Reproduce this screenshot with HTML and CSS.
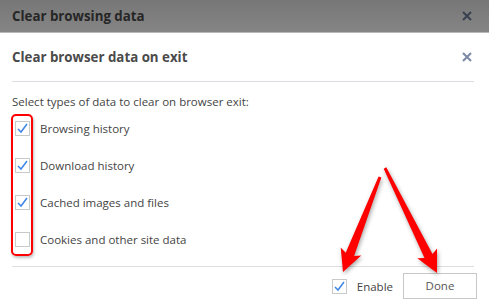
FILE: index.html
```html
<html>
	<head>
		<title>Clear browsing data</title>
		<link rel="stylesheet" href="styles.css">
	</head>
	<body>
		<div class="topbar">
			<span class="top-title">Clear browsing data</span>
			<svg class="close top-close" viewBox="0 0 10 10"><path d="M1 1L9 9M9 1L1 9"/></svg>
		</div>
		<div class="dialog">
			<div class="dialog-head">
				<span class="dialog-title">Clear browser data on exit</span>
				<svg class="close" viewBox="0 0 10 10"><path d="M1 1L9 9M9 1L1 9"/></svg>
			</div>
			<div class="dialog-body">
				<div class="intro">Select types of data to clear on browser exit:</div>
				<div class="option">
					<span class="box on"><svg viewBox="0 0 15 15"><path d="M3 8L6 11L12 3"/></svg></span>
					Browsing history
				</div>
				<div class="option">
					<span class="box on"><svg viewBox="0 0 15 15"><path d="M3 8L6 11L12 3"/></svg></span>
					Download history
				</div>
				<div class="option">
					<span class="box on"><svg viewBox="0 0 15 15"><path d="M3 8L6 11L12 3"/></svg></span>
					Cached images and files
				</div>
				<div class="option">
					<span class="box"></span>
					Cookies and other site data
				</div>
			</div>
			<div class="dialog-foot">
				<span class="box on"><svg viewBox="0 0 15 15"><path d="M3 8L6 11L12 3"/></svg></span>
				<span class="enable">Enable</span>
				<div class="btn">Done</div>
			</div>
		</div>
		<!-- annotations drawn on top of the screenshot -->
		<div class="mark"></div>
		<svg class="arrows" viewBox="0 0 489 308">
			<polygon points="381.4,177.5 354.1,255.9 361.3,255.5 343,272 340.7,247.5 345.7,252.7 378.6,176.5"/>
			<polygon points="386.3,167.3 432.5,254 437.1,248.4 437,273 417.3,258.2 424.5,258 383.7,168.7"/>
		</svg>
	</body>
</html>
```
FILE: styles.css
```css
html, body {margin:0;padding:0;}
body {
	font-family:"Open Sans", "Noto Sans", sans-serif;
	font-size:11.5px;
	color:#4a4a4a;
	background:#fff;
	width:489px;
	height:308px;
	overflow:hidden;
	position:relative;
}
.topbar {
	height:32px;
	background:linear-gradient(#777, #858585);
	border-bottom:1px solid #b8b8b8;
	display:flex;
	align-items:center;
	justify-content:space-between;
	padding:0 17px 0 12px;
}
.top-title {
	font-weight:bold;
	font-size:13.3px;
	color:#262626;
}
.close {
	width:10px;
	height:10px;
	stroke:#7b89a4;
	stroke-width:2;
	fill:none;
}
.top-close {
	stroke:#394150;
}
.dialog-head {
	height:48px;
	margin:0 15px 0 12px;
	border-bottom:1px solid #dcdce4;
	display:flex;
	align-items:center;
	justify-content:space-between;
	padding-right:2px;
}
.dialog-title {
	font-weight:bold;
	font-size:13.3px;
	color:#4a4a4a;
}
.dialog-body {
	margin:0 15px 0 12px;
	padding:11px 0 8px;
	border-bottom:1px solid #dedede;
}
.intro {
	line-height:17px;
	color:#444;
}
.option {
	height:37px;
	display:flex;
	align-items:center;
	color:#444;
}
.box {
	width:13px;
	height:13px;
	border:1px solid #c9c9c9;
	background:#fff;
	display:inline-block;
	margin:0 10px 0 3px;
	flex:none;
}
.box svg {
	width:15px;
	height:15px;
	margin:-1px 0 0 -1px;
	stroke:#3d86e8;
	stroke-width:1.5;
	fill:none;
	display:block;
}
.dialog-foot {
	display:flex;
	align-items:center;
	justify-content:flex-end;
	padding:6px 12px 0 0;
}
.dialog-foot .box {
	margin:0 10px 0 0;
}
.enable {
	color:#444;
	margin-right:10px;
}
.btn {
	width:72px;
	height:24px;
	border:1px solid #c8c8c8;
	text-align:center;
	line-height:24px;
	color:#555;
}
.mark {
	position:absolute;
	left:11px;
	top:114px;
	width:18px;
	height:138px;
	border:2px solid #f00;
	border-radius:5px;
	box-shadow:1px 2px 3px rgba(0,0,0,0.25);
}
.arrows {
	position:absolute;
	left:0;
	top:0;
	width:489px;
	height:308px;
	fill:#f00;
	filter:drop-shadow(1px 2px 2px rgba(0,0,0,0.35));
}
```
